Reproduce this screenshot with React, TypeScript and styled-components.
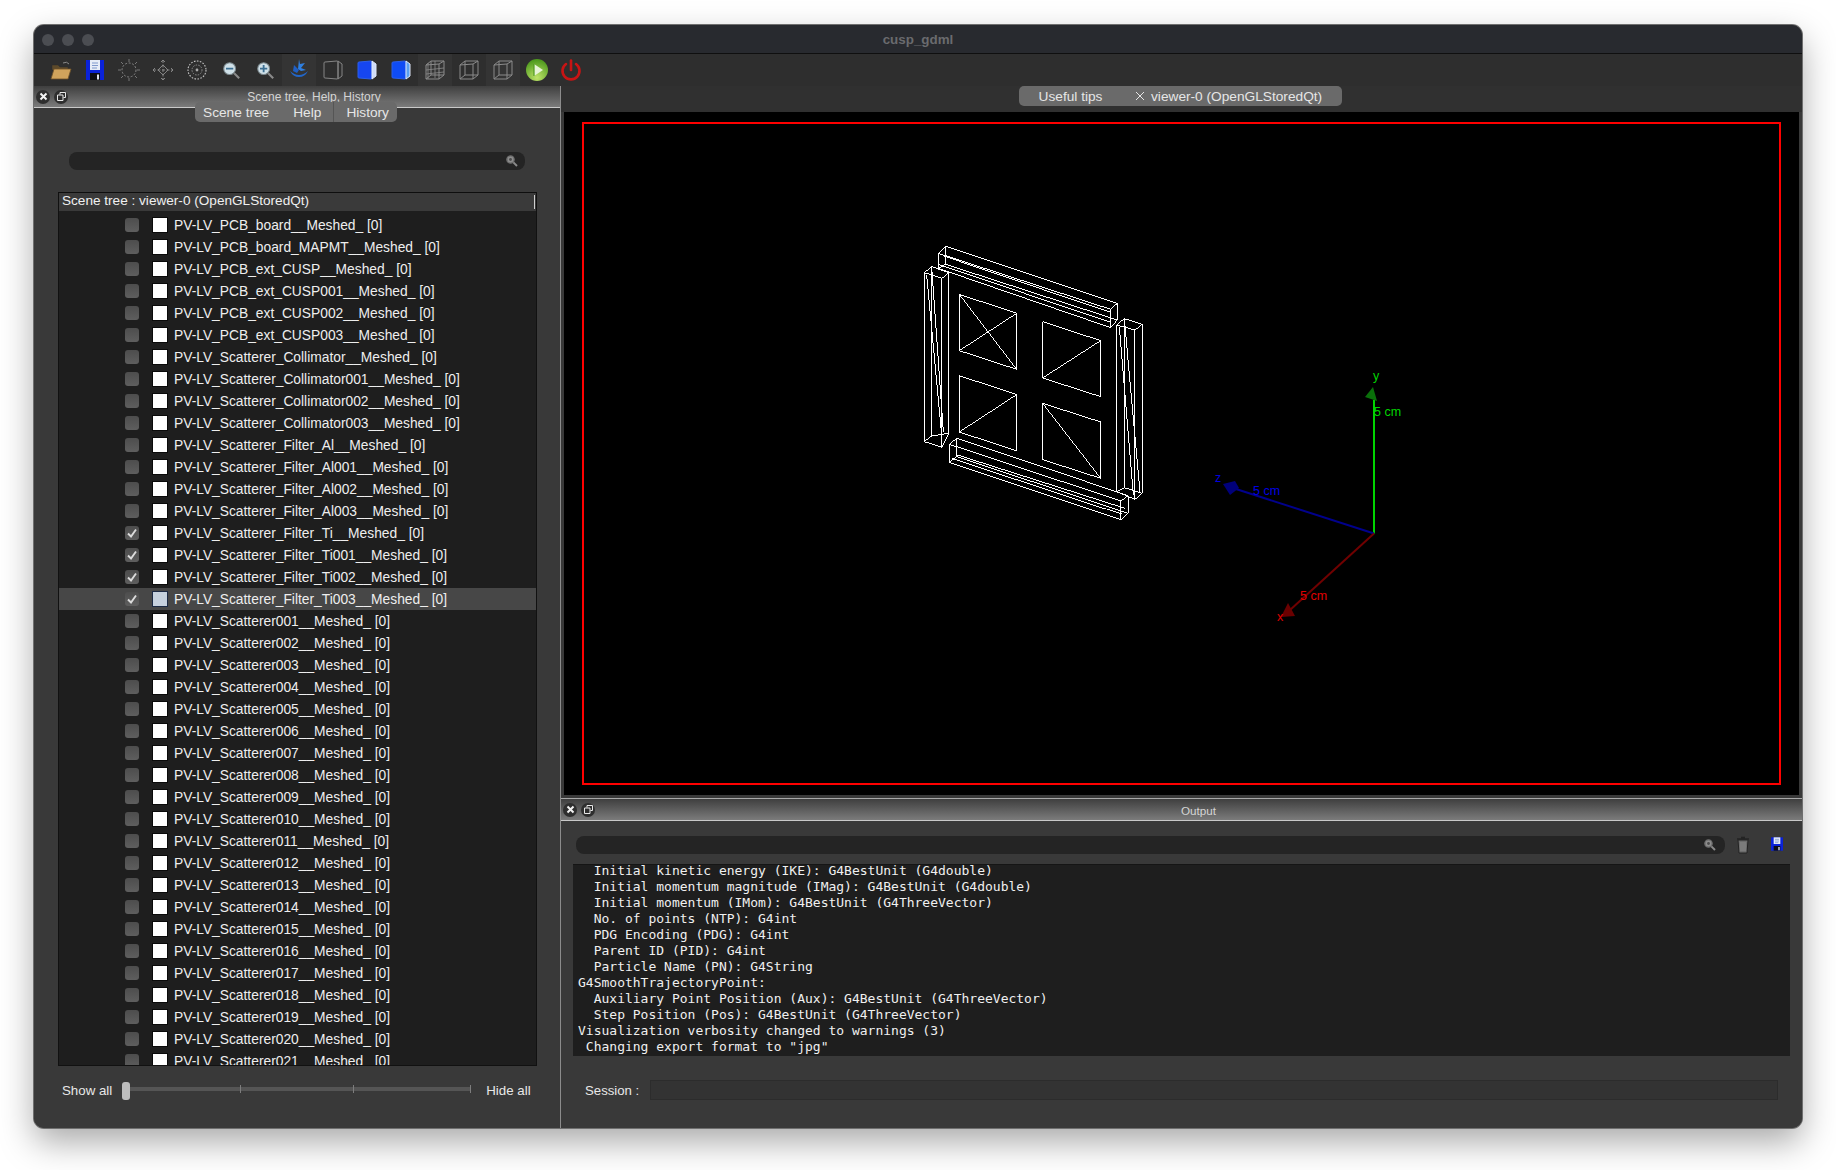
import styled, { createGlobalStyle } from "styled-components";

const GlobalStyle = createGlobalStyle`
  html, body { margin: 0; padding: 0; background: #ffffff; }
  body { font-family: "Liberation Sans", Arial, sans-serif; }
`;

const Page = styled.div`
  width: 1836px;
  height: 1170px;
  padding: 25px 34px 42px 34px;
  box-sizing: border-box;
  overflow: hidden;
`;

const Window = styled.div`
  height: 100%;
  display: flex;
  flex-direction: column;
  background: #393939;
  border-radius: 10px;
  overflow: hidden;
  box-sizing: border-box;
  box-shadow: 0 0 0 1px #6f6f6f, 0 14px 34px rgba(0, 0, 0, 0.34);
`;

const TitleBar = styled.div`
  height: 29px;
  flex: none;
  position: relative;
  display: flex;
  align-items: center;
  justify-content: center;
  background: #282a2f;
  border-bottom: 1px solid #0f0f0f;
  box-sizing: border-box;
`;

const Lights = styled.div`
  position: absolute;
  left: 8px;
  top: 9px;
  display: flex;
  gap: 8px;
`;

const Light = styled.span`
  width: 12px;
  height: 12px;
  border-radius: 50%;
  background: #4b4d52;
`;

const WindowName = styled.span`
  color: #6a6b6e;
  font-size: 13.4px;
  font-weight: 700;
`;

const Toolbar = styled.div`
  height: 32px;
  flex: none;
  display: flex;
  align-items: center;
  padding-left: 10px;
  background: #2e2e2e;
`;

const Tool = styled.div<{ $on?: boolean }>`
  width: 34px;
  height: 32px;
  flex: none;
  display: flex;
  align-items: center;
  justify-content: center;
  background: ${(p) => (p.$on ? "#343434" : "transparent")};
`;

const Main = styled.div`
  flex: 1;
  display: flex;
  min-height: 0;
`;

const LeftDock = styled.div`
  width: 527px;
  box-sizing: border-box;
  flex: none;
  display: flex;
  flex-direction: column;
  background: #393939;
  border-right: 1px solid #8c8c8c;
`;

const DockTitle = styled.div`
  height: 21px;
  flex: none;
  display: flex;
  align-items: center;
  padding-left: 2px;
  background: linear-gradient(#3f3f3f, #7b7b7b);
  border-bottom: 1px solid #c9c9c9;
  color: #d4d4d4;
  font-size: 12px;
`;

const OutputTitle = styled(DockTitle)`
  height: 23px;
  border-top: 1px solid #a8a8a8;
  box-sizing: border-box;
  font-size: 11.7px;
`;

const DockButton = styled.span`
  width: 14px;
  height: 14px;
  margin-right: 4px;
  border-radius: 50%;
  background: #2e2e2e;
  display: flex;
  align-items: center;
  justify-content: center;
  flex: none;
`;

const DockName = styled.span`
  flex: 1;
  text-align: center;
  padding-top: 1px;
  padding-right: 4px;
`;

const TabBar = styled.div`
  align-self: center;
  margin-top: -6px;
  margin-left: -2px;
  height: 20px;
  display: flex;
  align-items: center;
  background: #6a6a6a;
  border-radius: 5px;
  color: #e6e6e6;
  font-size: 13.7px;
  position: relative;
`;

const DockTab = styled.span<{ $last?: boolean }>`
  padding: 0 ${(p) => (p.$last ? "8px" : "12px")} 0 ${(p) => (p.$last ? "12px" : "10px")};
  height: 20px;
  line-height: 21px;
  border-left: ${(p) => (p.$last ? "1px solid #555" : "none")};

  &:first-child {
    padding: 0 14px 0 8px;
  }
`;

const SearchBar = styled.div`
  height: 18px;
  margin: 30px 35px 0;
  display: flex;
  align-items: center;
  justify-content: flex-end;
  padding-right: 6px;
  background: #242424;
  border-radius: 8px;
  flex: none;
`;

const Tree = styled.div`
  flex: 1;
  min-height: 0;
  margin: 22px 23px 0 24px;
  display: flex;
  flex-direction: column;
  background: #1e1e1e;
  border: 1px solid #111;
  border-top-color: #0e0e0e;
  overflow: hidden;
`;

const TreeHeader = styled.div`
  height: 18px;
  flex: none;
  display: flex;
  align-items: center;
  justify-content: space-between;
  padding: 0 1px 3px 3px;
  box-sizing: border-box;
  background: #3a3a3a;
  color: #f0f0f0;
  font-size: 13.6px;
  position: relative;
  z-index: 1;
`;

const HeaderEdge = styled.span`
  width: 1px;
  height: 14px;
  margin-bottom: -3px;
  background: #cfcfcf;
`;

const TreeRows = styled.div`
  flex: 1;
  min-height: 0;
  overflow: hidden;
`;

const RowList = styled.div`
  margin-top: -19px;
`;

const Row = styled.div<{ $selected?: boolean }>`
  height: 22px;
  display: flex;
  align-items: center;
  padding-left: 66px;
  background: ${(p) => (p.$selected ? "#474747" : "transparent")};
  color: #eeeeee;
  font-size: 13.8px;
  white-space: nowrap;
`;

const CheckBox = styled.span`
  width: 14px;
  height: 14px;
  flex: none;
  border-radius: 3px;
  background: linear-gradient(#4d4d4d, #5e5e5e);
  display: flex;
  align-items: center;
  justify-content: center;
`;

const Swatch = styled.span<{ $selected?: boolean }>`
  width: 16px;
  height: 16px;
  flex: none;
  margin-left: 13px;
  margin-right: 6px;
  box-sizing: border-box;
  border: 1px solid ${(p) => (p.$selected ? "#1c2a44" : "#0a0a0a")};
  background: ${(p) => (p.$selected ? "#c6d1de" : "#ffffff")};
`;

const SliderRow = styled.div`
  height: 49px;
  margin-bottom: 13px;
  flex: none;
  display: flex;
  align-items: center;
  padding-left: 28px;
  color: #e8e8e8;
  font-size: 13.3px;
`;

const SliderHandle = styled.span`
  width: 8px;
  height: 18px;
  margin-left: 10px;
  border-radius: 3px;
  background: #bdbdbd;
  flex: none;
`;

const SliderTrack = styled.div`
  margin-right: 15px;
  display: flex;
  align-items: center;
  flex: none;
  margin-top: -3px;
`;

const TrackPart = styled.span<{ $w: number }>`
  width: ${(p) => p.$w}px;
  height: 4px;
  background: #555;
`;

const TrackTick = styled.span`
  width: 1px;
  height: 8px;
  background: #7d7d7d;
  flex: none;
`;

const RightColumn = styled.div`
  flex: 1;
  min-width: 0;
  display: flex;
  flex-direction: column;
  background: #393939;
`;

const ViewerTabRow = styled.div`
  height: 26px;
  flex: none;
  display: flex;
  justify-content: center;
  background: #303030;
`;

const ViewerTabs = styled.div`
  height: 20px;
  width: 323px;
  display: flex;
  align-items: center;
  background: #6a6a6a;
  border-radius: 5px;
  color: #e6e6e6;
  font-size: 13.7px;
  margin-left: -2px;
`;

const TipsTab = styled.span`
  width: 103px;
  margin-right: 13px;
  text-align: center;
`;

const ViewerTab = styled.span`
  display: flex;
  align-items: center;
  gap: 6px;
`;

const Viewer = styled.div`
  height: 683px;
  flex: none;
  margin: 0 3px;
  padding: 10px 18px;
  box-sizing: border-box;
  background: #000;
`;

const RedFrame = styled.div`
  height: 100%;
  box-sizing: border-box;
  border: 2px solid #ff0000;
`;

const Scene = styled.svg`
  display: block;
  width: 100%;
  height: 100%;
`;

const Gap = styled.div`
  height: 3px;
  flex: none;
`;

const OutputBar = styled.div`
  height: 18px;
  flex: none;
  margin: 15px 0 0 15px;
  display: flex;
  align-items: center;
`;

const OutputSearch = styled(SearchBar)`
  margin: 0;
  flex: 1;
  padding-right: 8px;
`;

const BarIcon = styled.span`
  width: 34px;
  display: flex;
  justify-content: center;
  flex: none;
`;

const OutputActions = styled.div`
  display: flex;
  padding-left: 1px;
  padding-right: 8px;
`;

const OutputText = styled.pre`
  height: 192px;
  flex: none;
  margin: 10px 12px 0 12px;
  padding: 0 0 0 5px;
  box-sizing: border-box;
  background: #1e1e1e;
  border-top: 1px solid #151515;
  color: #f0f0f0;
  font-family: "DejaVu Sans Mono", "Liberation Mono", monospace;
  font-size: 13px;
  line-height: 16px;
  overflow: hidden;
`;

const OutputLines = styled.code`
  display: block;
  margin-top: -2px;
  font: inherit;
`;

const SessionRow = styled.div`
  height: 20px;
  margin-top: 24px;
  flex: none;
  display: flex;
  align-items: center;
  padding-left: 24px;
  color: #e8e8e8;
  font-size: 13.2px;
`;

const SessionInput = styled.div`
  width: 1128px;
  height: 20px;
  margin-left: 11px;
  background: #333;
  border: 1px solid #2c2c2c;
  box-sizing: border-box;
`;

/* ---- drawings ---- */

const Lens = () => (
  <svg width="14" height="14" viewBox="0 0 14 14">
    <circle cx="5.5" cy="5.5" r="3.6" fill="#8d8d8d" stroke="#6f6f6f" strokeWidth="1.4" />
    <circle cx="5.5" cy="5.5" r="1.4" fill="#4c4c4c" />
    <path d="M8.4 8.4 L12 12" stroke="#8a8a8a" strokeWidth="2" />
  </svg>
);

const FolderIcon = () => (
  <svg width="24" height="24" viewBox="0 0 24 24">
    <path d="M3 7 h6 l2 2 h8 v3 H3z" fill="#5d4a2a" stroke="#2c2c2c" strokeWidth="0.5" />
    <path d="M5 11 h17 l-3 10 H2z" fill="#d0a35c" stroke="#6e5228" strokeWidth="0.8" />
    <path d="M14 5 q4 -2 6 1" fill="none" stroke="#8a8a8a" strokeWidth="1" />
  </svg>
);

const SaveIcon = ({ size = 24 }: { size?: number }) => (
  <svg width={size} height={size} viewBox="0 0 24 24">
    <path d="M3 2 h18 v20 H3z" fill="#0a22d8" />
    <path d="M7 2 h10 v10 H7z" fill="#e6ecf7" />
    <path d="M9 5 h6 M9 7.5 h6 M9 10 h5" stroke="#7f98cc" strokeWidth="1.2" />
    <path d="M7 15 h10 v7 H7z" fill="#0d0d14" />
    <path d="M14 16.5 h2 v5 h-2z" fill="#dfe3ee" />
  </svg>
);

const DottedRing = () => (
  <svg width="24" height="24" viewBox="0 0 24 24" fill="none" stroke="#8c8c8c" strokeWidth="0.9">
    <circle cx="12" cy="12" r="7" strokeDasharray="2 1.6" />
    <path d="M12 1v3M12 20v3M1 12h3M20 12h3M4 4l2 2M18 18l2 2M4 20l2-2M18 6l2-2" strokeWidth="0.8" />
  </svg>
);

const MoveIcon = () => (
  <svg width="24" height="24" viewBox="0 0 24 24" fill="none" stroke="#8c8c8c" strokeWidth="0.9">
    <path d="M12 7 L17 12 L12 17 L7 12z" />
    <path d="M12 2v20M2 12h20" strokeDasharray="3 1.5" />
    <path d="M10 4l2-2 2 2M10 20l2 2 2-2M4 10l-2 2 2 2M20 10l2 2-2 2" />
  </svg>
);

const TargetIcon = () => (
  <svg width="24" height="24" viewBox="0 0 24 24" fill="none" stroke="#c4c4c4">
    <circle cx="12" cy="12" r="9" strokeDasharray="1.6 1.4" strokeWidth="1.1" />
    <circle cx="12" cy="12" r="5" strokeDasharray="1.5 1.2" stroke="#8c8c8c" />
    <circle cx="12" cy="12" r="1.4" fill="#aaa" stroke="none" />
  </svg>
);

const ZoomIcon = ({ plus }: { plus?: boolean }) => (
  <svg width="20" height="20" viewBox="0 0 22 22">
    <circle cx="9.5" cy="9.5" r="6.5" fill="#cfe0e8" stroke="#7d8a8f" strokeWidth="1.2" />
    <path d="M5.5 9.5h8" stroke="#3c6f92" strokeWidth="2" />
    {plus && <path d="M9.5 5.5v8" stroke="#3c6f92" strokeWidth="2" />}
    <path d="M14.5 14.5 L20 20" stroke="#8a8a8a" strokeWidth="2.4" />
  </svg>
);

const InkIcon = () => (
  <svg width="24" height="24" viewBox="0 0 24 24">
    <path d="M12 1 l1 5 5 -1 -4 5 5 2 -5 1 -3 -2 z" fill="#2f7fe0" />
    <path d="M7 7 l5 5 -2 3 -4 -2z" fill="#1f5fc4" />
    <path d="M3 13 q9 8 18 0 q-3 6 -9 6 q-6 0 -9 -6z" fill="#2266c8" />
  </svg>
);

const WireBox = ({ fill, side }: { fill?: string; side?: string }) => (
  <svg width="24" height="24" viewBox="0 0 24 24" fill="none" stroke="#858585" strokeWidth="1">
    <path d="M3 5 Q3 4 4 4 L16 3 Q17 3 17 4 L17 20 Q17 21 16 21 L4 20 Q3 20 3 19z" fill={fill ?? "none"} stroke={fill ? "#2b5fe8" : "#858585"} />
    <path d="M17 3 L21 6 L21 18 L17 21z" fill={side ?? "none"} stroke={side ? "#dfe8fa" : "#858585"} />
  </svg>
);

const WireCube = ({ busy }: { busy?: boolean }) => (
  <svg width="24" height="24" viewBox="0 0 24 24" fill="none" stroke="#8a8a8a" strokeWidth="1">
    <path d="M3 7 L16 6 L16 21 L3 21z" />
    <path d="M8 3 L21 3 L21 17 L8 17z" />
    <path d="M3 7 L8 3M16 6 L21 3M16 21 L21 17M3 21 L8 17" />
    {busy && <path d="M5 5 V21M12 3 V20M3 12 L21 10M3 16 L21 14" strokeWidth="0.8" />}
  </svg>
);

const PlayIcon = () => (
  <svg width="24" height="24" viewBox="0 0 24 24">
    <defs>
      <radialGradient id="playBall" cx="50%" cy="85%" r="80%">
        <stop offset="0" stopColor="#bfe36a" />
        <stop offset="1" stopColor="#4f9a1e" />
      </radialGradient>
    </defs>
    <circle cx="12" cy="12" r="11" fill="url(#playBall)" />
    <path d="M9 6 L18 12 L9 18z" fill="#e8f4d8" />
    <path d="M9 6 V18" stroke="#4f9a1e" strokeWidth="1.2" />
  </svg>
);

const PowerIcon = () => (
  <svg width="24" height="24" viewBox="0 0 24 24" fill="none" stroke="#c81414" strokeWidth="2.6" strokeLinecap="round">
    <path d="M7 6 a8.5 8.5 0 1 0 10 0" />
    <path d="M12 2.5 V12" />
  </svg>
);

const TrashIcon = () => (
  <svg width="16" height="18" viewBox="0 0 16 18">
    <path d="M3 4 h10 l-1 13 H4z" fill="#6c6c6c" stroke="#232323" />
    <path d="M2 3 h12 M6 1.5 h4" stroke="#232323" strokeWidth="1.4" />
    <path d="M6 6v9M8 6v9M10 6v9" stroke="#8a8a8a" />
  </svg>
);

const CloseGlyph = () => (
  <svg width="9" height="9" viewBox="0 0 9 9">
    <path d="M1.5 1.5 L7.5 7.5 M7.5 1.5 L1.5 7.5" stroke="#f2f2f2" strokeWidth="2" />
  </svg>
);

const FloatGlyph = () => (
  <svg width="9" height="9" viewBox="0 0 9 9" fill="none" stroke="#e8e8e8">
    <path d="M3 2.5 V0.5 H8.5 V5.5 H6.5" />
    <path d="M0.5 3 H6 V8.5 H0.5z" />
  </svg>
);

const CheckGlyph = () => (
  <svg width="12" height="12" viewBox="0 0 12 12" fill="none">
    <path d="M2 6.5 L5 9.5 L10 2.5" stroke="#dcdcdc" strokeWidth="1.9" />
  </svg>
);

/* wireframe points as read from the 3x crop at (880,225) */
const wire: number[][] = [
  // collimator windows
  [238, 208, 410, 265, 410, 433, 238, 377, 238, 208, 410, 433],
  [238, 377, 410, 265],
  [488, 290, 662, 347, 662, 515, 488, 459, 488, 290],
  [488, 459, 662, 347],
  [238, 452, 410, 509, 410, 678, 238, 621, 238, 452],
  [238, 621, 410, 509],
  [488, 535, 662, 591, 662, 760, 488, 704, 488, 535, 662, 760],
  // top bar
  [197, 64, 712, 235, 692, 253, 175, 85, 197, 64],
  [175, 85, 175, 130, 692, 308, 692, 253],
  [712, 235, 712, 285, 692, 308],
  [197, 64, 197, 118, 712, 285],
  [175, 130, 197, 118],
  [188, 92, 692, 262],
  [175, 118, 692, 292],
  // left bar
  [155, 125, 207, 143, 186, 160, 133, 143, 155, 125],
  [133, 143, 133, 650, 186, 667, 186, 160],
  [207, 143, 207, 625, 186, 667],
  [155, 125, 155, 633, 133, 650],
  [155, 633, 207, 625],
  [140, 150, 186, 640],
  [155, 125, 190, 620],
  // right bar
  [733, 281, 787, 298, 765, 315, 710, 300, 733, 281],
  [710, 300, 710, 800, 765, 823, 765, 315],
  [787, 298, 787, 805, 765, 823],
  [733, 281, 733, 788, 710, 800],
  [733, 788, 787, 805],
  [718, 305, 760, 810],
  [733, 281, 780, 800],
  // bottom bar
  [230, 640, 745, 812, 723, 828, 208, 658, 230, 640],
  [208, 658, 208, 712, 723, 884, 723, 828],
  [745, 812, 745, 865, 723, 884],
  [230, 640, 230, 695, 745, 865],
  [208, 712, 230, 695],
  [232, 690, 735, 850],
  [215, 700, 725, 868],
];

const Wireframe = () => (
  <g transform="translate(880 225) scale(0.3333)" fill="none" stroke="#ffffff" strokeWidth="3" shapeRendering="crispEdges">
    {wire.map((pts, i) => (
      <polyline key={i} points={pts.join(" ")} />
    ))}
  </g>
);

const Axes = () => (
  <g fontFamily="'Liberation Sans', Arial, sans-serif" fontSize="12.5">
    <path d="M1374 533.5 V400" stroke="#00d400" strokeWidth="2" />
    <path d="M1373 387 L1365 397 L1377 401z" fill="#0a700a" />
    <text x="1373" y="380" fill="#00d400">y</text>
    <text x="1374" y="416" fill="#00d400">5 cm</text>

    <path d="M1374 533.5 L1236 489" stroke="#00008c" strokeWidth="2" />
    <path d="M1223 484 L1235 481 L1239 488 L1230 495z" fill="#00007a" />
    <text x="1215" y="482" fill="#0000e0">z</text>
    <text x="1253" y="495" fill="#0000e0">5 cm</text>

    <path d="M1374 533.5 L1290 610" stroke="#700000" strokeWidth="2" />
    <path d="M1288 603 L1295 616 L1281 617z" fill="#6a0000" />
    <text x="1277" y="621" fill="#e00000">x</text>
    <text x="1300" y="600" fill="#e00000">5 cm</text>
  </g>
);

/* ---- data ---- */

const num = (n: number) => String(n).padStart(3, "0");

const names: string[] = [
  "PV-LV_Mounting_Bracket",
  "PV-LV_PCB_board",
  "PV-LV_PCB_board_MAPMT",
  "PV-LV_PCB_ext_CUSP",
  "PV-LV_PCB_ext_CUSP001",
  "PV-LV_PCB_ext_CUSP002",
  "PV-LV_PCB_ext_CUSP003",
  "PV-LV_Scatterer_Collimator",
  "PV-LV_Scatterer_Collimator001",
  "PV-LV_Scatterer_Collimator002",
  "PV-LV_Scatterer_Collimator003",
  "PV-LV_Scatterer_Filter_Al",
  "PV-LV_Scatterer_Filter_Al001",
  "PV-LV_Scatterer_Filter_Al002",
  "PV-LV_Scatterer_Filter_Al003",
  "PV-LV_Scatterer_Filter_Ti",
  "PV-LV_Scatterer_Filter_Ti001",
  "PV-LV_Scatterer_Filter_Ti002",
  "PV-LV_Scatterer_Filter_Ti003",
  ...Array.from({ length: 21 }, (_, i) => `PV-LV_Scatterer${num(i + 1)}`),
];

const outputLines = `  Initial kinetic energy (IKE): G4BestUnit (G4double)
  Initial momentum magnitude (IMag): G4BestUnit (G4double)
  Initial momentum (IMom): G4BestUnit (G4ThreeVector)
  No. of points (NTP): G4int
  PDG Encoding (PDG): G4int
  Parent ID (PID): G4int
  Particle Name (PN): G4String
G4SmoothTrajectoryPoint:
  Auxiliary Point Position (Aux): G4BestUnit (G4ThreeVector)
  Step Position (Pos): G4BestUnit (G4ThreeVector)
Visualization verbosity changed to warnings (3)
 Changing export format to "jpg"`;

function App() {
  return (
    <Page>
      <GlobalStyle />
      <Window>
        <TitleBar>
          <Lights>
            <Light />
            <Light />
            <Light />
          </Lights>
          <WindowName>cusp_gdml</WindowName>
        </TitleBar>
        <Toolbar>
          <Tool><FolderIcon /></Tool>
          <Tool><SaveIcon /></Tool>
          <Tool><DottedRing /></Tool>
          <Tool><MoveIcon /></Tool>
          <Tool><TargetIcon /></Tool>
          <Tool><ZoomIcon /></Tool>
          <Tool><ZoomIcon plus /></Tool>
          <Tool $on><InkIcon /></Tool>
          <Tool><WireBox /></Tool>
          <Tool><WireBox fill="#1646f0" side="#cfdcf8" /></Tool>
          <Tool><WireBox fill="#0f4cf5" side="#5aa0f0" /></Tool>
          <Tool $on><WireCube busy /></Tool>
          <Tool><WireCube /></Tool>
          <Tool $on><WireCube /></Tool>
          <Tool><PlayIcon /></Tool>
          <Tool><PowerIcon /></Tool>
        </Toolbar>
        <Main>
          <LeftDock>
            <DockTitle>
              <DockButton><CloseGlyph /></DockButton>
              <DockButton><FloatGlyph /></DockButton>
              <DockName>Scene tree, Help, History</DockName>
            </DockTitle>
            <TabBar>
              <DockTab>Scene tree</DockTab>
              <DockTab>Help</DockTab>
              <DockTab $last>History</DockTab>
            </TabBar>
            <SearchBar><Lens /></SearchBar>
            <Tree>
              <TreeHeader>
                Scene tree : viewer-0 (OpenGLStoredQt)
                <HeaderEdge />
              </TreeHeader>
              <TreeRows>
                <RowList>
                  {names.map((name, i) => (
                    <Row key={name} $selected={i === 18}>
                      <CheckBox>{i >= 15 && i <= 18 && <CheckGlyph />}</CheckBox>
                      <Swatch $selected={i === 18} />
                      {name}__Meshed_ [0]
                    </Row>
                  ))}
                </RowList>
              </TreeRows>
            </Tree>
            <SliderRow>
              Show all
              <SliderHandle />
              <SliderTrack>
                <TrackPart $w={110} />
                <TrackTick />
                <TrackPart $w={112} />
                <TrackTick />
                <TrackPart $w={116} />
                <TrackTick />
              </SliderTrack>
              Hide all
            </SliderRow>
          </LeftDock>
          <RightColumn>
            <ViewerTabRow>
              <ViewerTabs>
                <TipsTab>Useful tips</TipsTab>
                <ViewerTab>
                  <svg width="10" height="10" viewBox="0 0 10 10">
                    <path d="M1 1 L9 9 M9 1 L1 9" stroke="#e6e6e6" strokeWidth="1" />
                  </svg>
                  viewer-0 (OpenGLStoredQt)
                </ViewerTab>
              </ViewerTabs>
            </ViewerTabRow>
            <Viewer>
              <RedFrame>
                <Scene viewBox="584 124 1195 659">
                  <Wireframe />
                  <Axes />
                </Scene>
              </RedFrame>
            </Viewer>
            <Gap />
            <OutputTitle>
              <DockButton><CloseGlyph /></DockButton>
              <DockButton><FloatGlyph /></DockButton>
              <DockName>Output</DockName>
            </OutputTitle>
            <OutputBar>
              <OutputSearch><Lens /></OutputSearch>
              <OutputActions>
                <BarIcon><TrashIcon /></BarIcon>
                <BarIcon><SaveIcon size={16} /></BarIcon>
              </OutputActions>
            </OutputBar>
            <OutputText><OutputLines>{outputLines}</OutputLines></OutputText>
            <SessionRow>
              Session :
              <SessionInput />
            </SessionRow>
          </RightColumn>
        </Main>
      </Window>
    </Page>
  );
}

export default App;
